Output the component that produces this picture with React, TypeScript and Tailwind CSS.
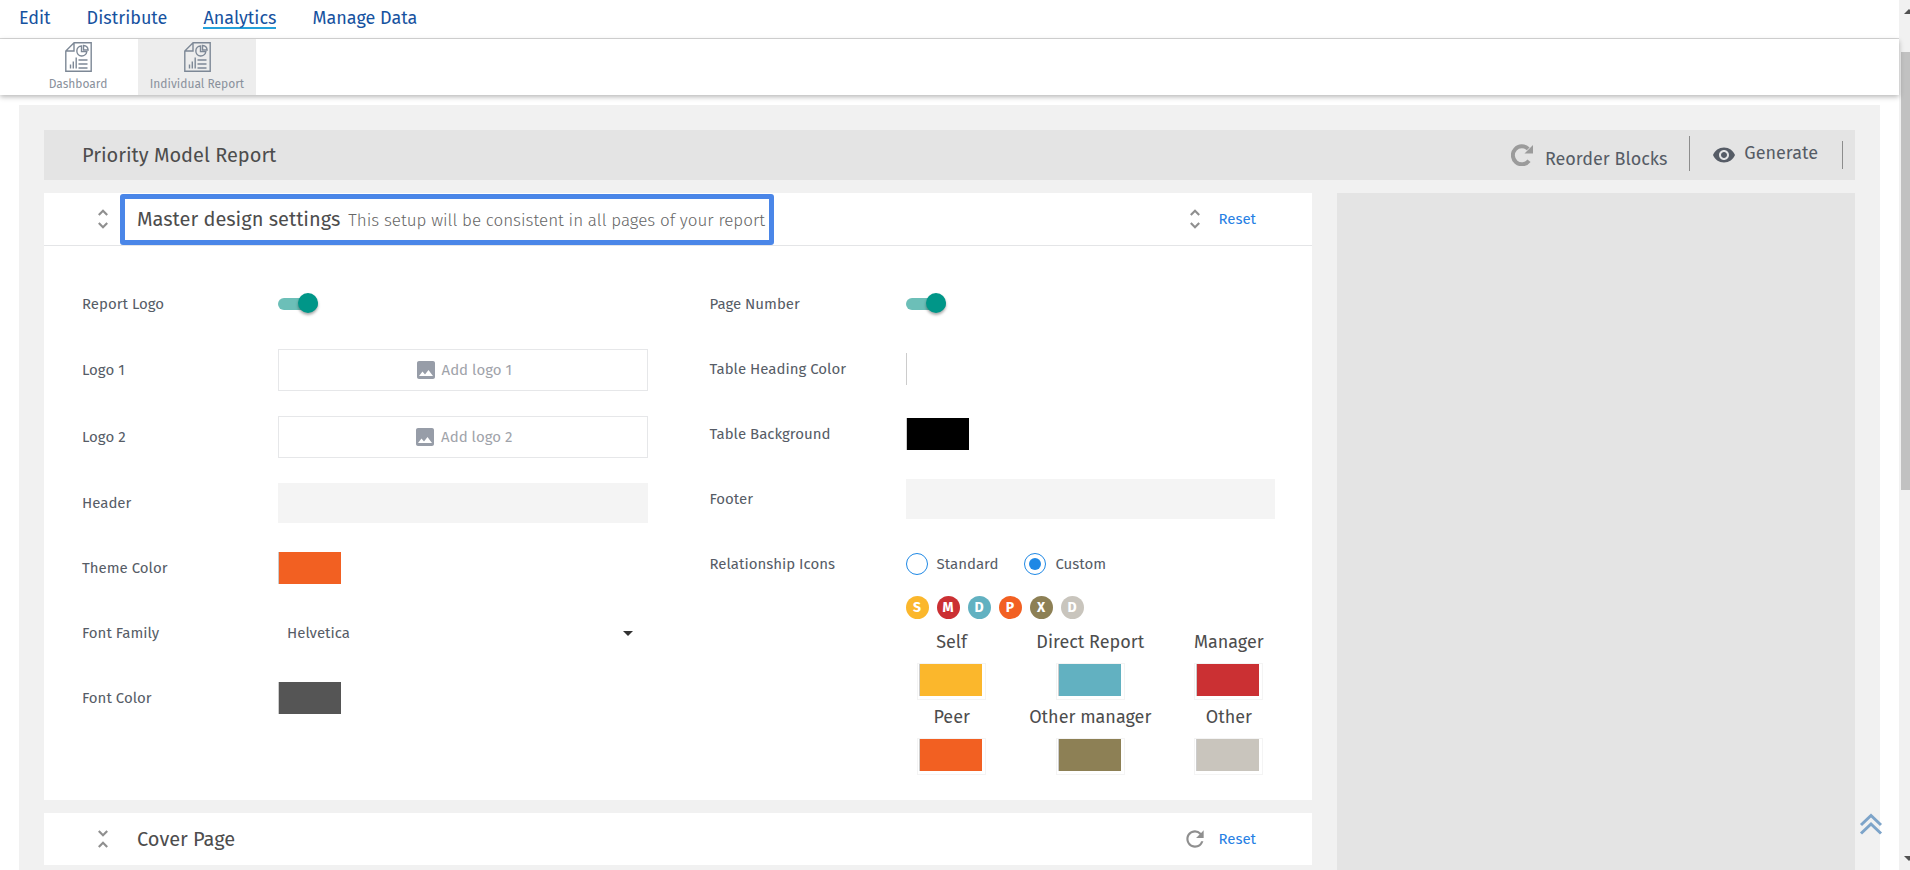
import React, { useState } from 'react';
import { MdArrowDropDown, MdImage, MdRefresh, MdUnfoldLess, MdUnfoldMore, MdVisibility } from 'react-icons/md';

const navItems = ['Edit', 'Distribute', 'Analytics', 'Manage Data'];

const badges = [
  { letter: 'S', color: '#fbb72c' },
  { letter: 'M', color: '#cb3033' },
  { letter: 'D', color: '#62b1c1' },
  { letter: 'P', color: '#f26022' },
  { letter: 'X', color: '#8d8055' },
  { letter: 'D', color: '#c9c5bd' },
];

const relations = [
  { name: 'Self', color: '#fbb72c' },
  { name: 'Direct Report', color: '#62b1c1' },
  { name: 'Manager', color: '#cb3033' },
  { name: 'Peer', color: '#f26022' },
  { name: 'Other manager', color: '#8d8055' },
  { name: 'Other', color: '#c9c5bd' },
];

const ReportIcon: React.FC = () => (
  <svg width="27" height="30" viewBox="0 0 27 30" fill="none" stroke="#7d8896" strokeWidth="1.4" aria-hidden="true">
    <path d="M9 .8H26.200V29.200H.8V9L9 .8V9H.8" />
    <path d="M16.500 4a5 5 0 1 0 5.300 5.600h-5.300z" />
    <path d="M18.500 3.500a4.800 4.800 0 0 1 4.600 4.500h-4.600z" />
    <path d="M5.500 26.500v-4M8.300 26.500v-7M11.200 26.500V15.500M13.500 18h9M13.500 22h9M13.500 26h9" />
  </svg>
);

const ReorderIcon: React.FC = () => (
  <svg width="22" height="22" viewBox="0 0 22 22" aria-hidden="true">
    <path d="M18 16.800A9 9 0 1 1 17.200 4.900" fill="none" stroke="#9b9b9b" strokeWidth="4" />
    <path d="M22 1v8.500h-8.500z" fill="#9b9b9b" />
  </svg>
);

interface RowProps {
  label: string;
  htmlFor?: string;
  children: React.ReactNode;
}

const Row: React.FC<RowProps> = ({ label, htmlFor, children }) => (
  <div className="flex min-h-10 items-center">
    <label htmlFor={htmlFor} className="w-[196px] shrink-0 text-[15px]">{label}</label>
    <div className="flex min-w-0 flex-1 items-center">{children}</div>
  </div>
);

const Toggle: React.FC<{ id: string }> = ({ id }) => (
  <input
    id={id}
    type="checkbox"
    role="switch"
    defaultChecked
    className="relative h-3 w-10 cursor-pointer appearance-none rounded-full bg-[#b5b5b5] checked:bg-[#6cbfb8] after:absolute after:-top-[5px] after:left-0 after:size-5 after:rounded-full after:bg-white after:shadow-[0_2px_3px_rgba(0,0,0,0.35)] checked:after:left-5 checked:after:bg-[#009688]"
  />
);

const Swatch: React.FC<{ id: string; color: string }> = ({ id, color }) => (
  <input
    id={id}
    type="color"
    defaultValue={color}
    className="h-8 w-[63px] cursor-pointer appearance-none border-l border-[#cccccc] p-0 [&::-webkit-color-swatch]:rounded-none [&::-webkit-color-swatch]:border-0 [&::-webkit-color-swatch-wrapper]:p-0"
  />
);

const LogoButton: React.FC<{ id: string; text: string }> = ({ id, text }) => (
  <button id={id} className="flex h-[42px] w-full items-center justify-center gap-1 border border-[#e6e7e9] text-[15px] text-[#9fa3aa]">
    <MdImage className="size-6 text-[#979da8]" />
    {text}
  </button>
);

const textBox = 'h-10 w-full bg-[#f4f4f4] px-2 text-[15px] outline-none';

const App: React.FC = () => {
  const [iconSet, setIconSet] = useState('Custom');

  return (
    <div className="flex h-screen overflow-hidden bg-white font-['Fira_Sans','Noto_Sans',sans-serif] text-[#565c66]">
      <div className="relative flex min-w-0 flex-1 flex-col">
        <nav className="flex h-[39px] shrink-0 gap-9 border-b border-[#d8d8d8] px-[19px] pt-1 text-lg leading-7 text-[#1652a0]">
          {navItems.map((item) => (
            <a key={item} href="#" className={item === 'Analytics' ? 'h-[25px] border-b-2 border-[#24a0da]' : ''}>{item}</a>
          ))}
        </nav>

        <div className="relative z-10 flex h-14 shrink-0 bg-white pl-[18px] text-xs text-[#8a919c] shadow-[0_2px_5px_rgba(0,0,0,0.28)]">
          <a href="#" className="flex w-[120px] flex-col items-center gap-1 pt-[3px]">
            <ReportIcon />
            Dashboard
          </a>
          <a href="#" className="flex w-[118px] flex-col items-center gap-1 bg-[#ededed] pt-[3px]">
            <ReportIcon />
            Individual Report
          </a>
        </div>

        <main className="mx-[19px] mt-[10px] flex min-h-0 flex-1 flex-col overflow-hidden bg-[#f1f1f1] px-[25px] pt-[25px]">
          <header className="flex h-[50px] shrink-0 items-center bg-[#e4e4e4] pr-3 pl-[38px]">
            <h1 className="flex-1 text-xl text-[#4d4d4d]">Priority Model Report</h1>
            <button className="flex items-center gap-3 text-lg">
              <ReorderIcon />
              <span className="pt-2">Reorder Blocks</span>
            </button>
            <div className="mb-1 ml-[22px] h-[35px] w-px bg-[#8d8d8d]" />
            <button className="ml-[22px] flex items-center gap-2 text-lg">
              <MdVisibility className="size-6" />
              <span className="pb-1">Generate</span>
            </button>
            <div className="ml-6 h-7 w-px bg-[#8d8d8d]" />
          </header>

          <div className="mt-[13px] flex min-h-0 flex-1 gap-[25px]">
            <div className="flex min-w-0 flex-[1268_1_0%] flex-col gap-[13px]">
              <section className="shrink-0 bg-white">
                <div className="flex h-[53px] items-center border-b border-[#e4e5e7] pr-14 pl-[46px]">
                  <button aria-label="Collapse" className="text-[#8f8f8f]"><MdUnfoldMore className="size-[26px]" /></button>
                  <div className="ml-1 flex h-[51px] items-baseline gap-2 rounded-[3px] border-[5px] border-[#4a86e8] pt-[6px] pr-1 pl-3">
                    <h2 className="text-xl text-[#4d4d4d]">Master design settings</h2>
                    <p className="text-[17px] font-light text-[#666666]">This setup will be consistent in all pages of your report</p>
                  </div>
                  <MdUnfoldMore className="ml-auto size-[26px] text-[#8f8f8f]" />
                  <button className="ml-[10px] text-[15px] text-[#2680e4]">Reset</button>
                </div>

                <div className="grid grid-cols-2 gap-x-[62px] pt-[38px] pr-[37px] pb-[23px] pl-[38px]">
                  <div className="flex flex-col gap-[25px]">
                    <Row label="Report Logo" htmlFor="report-logo"><Toggle id="report-logo" /></Row>
                    <Row label="Logo 1" htmlFor="logo-1"><LogoButton id="logo-1" text="Add logo 1" /></Row>
                    <Row label="Logo 2" htmlFor="logo-2"><LogoButton id="logo-2" text="Add logo 2" /></Row>
                    <Row label="Header" htmlFor="header"><input id="header" type="text" className={textBox} /></Row>
                    <Row label="Theme Color" htmlFor="theme-color"><Swatch id="theme-color" color="#f26022" /></Row>
                    <Row label="Font Family" htmlFor="font-family">
                      <div className="relative w-full">
                        <select id="font-family" className="h-10 w-full appearance-none bg-transparent px-[9px] text-[15px]">
                          <option>Helvetica</option>
                        </select>
                        <MdArrowDropDown className="pointer-events-none absolute top-2 right-2 size-6 text-[#333333]" />
                      </div>
                    </Row>
                    <Row label="Font Color" htmlFor="font-color"><Swatch id="font-color" color="#555555" /></Row>
                  </div>

                  <div className="flex flex-col">
                    <div className="flex flex-col gap-[25px]">
                      <Row label="Page Number" htmlFor="page-number"><Toggle id="page-number" /></Row>
                      <Row label="Table Heading Color" htmlFor="heading-color"><Swatch id="heading-color" color="#ffffff" /></Row>
                      <Row label="Table Background" htmlFor="table-background"><Swatch id="table-background" color="#000000" /></Row>
                      <Row label="Footer" htmlFor="footer"><input id="footer" type="text" className={textBox} /></Row>
                      <Row label="Relationship Icons">
                        <div className="flex gap-[26px]">
                          {['Standard', 'Custom'].map((option) => (
                            <label key={option} className="flex items-center gap-[9px] text-[15px]">
                              <input
                                type="radio"
                                name="icon-set"
                                checked={iconSet === option}
                                onChange={() => setIconSet(option)}
                                className="size-[22px] appearance-none rounded-full border border-[#1e88e5] bg-clip-content p-1 checked:bg-[#1e88e5]"
                              />
                              {option}
                            </label>
                          ))}
                        </div>
                      </Row>
                    </div>

                    <div className="mt-3 pl-[196px]">
                      <div className="flex gap-2">
                        {badges.map((badge, i) => (
                          <span
                            key={i}
                            className="flex size-[23px] items-center justify-center rounded-full text-sm font-bold text-white"
                            style={{ backgroundColor: badge.color }}
                          >
                            {badge.letter}
                          </span>
                        ))}
                      </div>
                      <div className="mt-2 grid grid-cols-4">
                        {relations.map((relation, i) => (
                          <label
                            key={relation.name}
                            className={`flex h-[75px] flex-col items-center gap-1.5 text-lg leading-[30px] text-[#4d4d4d] ${i % 3 === 1 ? 'col-span-2' : ''}`}
                          >
                            {relation.name}
                            <span className="flex h-[37px] w-[69px] border border-[#f4f4f4] pl-px">
                              <Swatch id={`relation-${i}`} color={relation.color} />
                            </span>
                          </label>
                        ))}
                      </div>
                    </div>
                  </div>
                </div>
              </section>

              <section className="flex h-[52px] shrink-0 items-center bg-white pr-14 pl-[46px]">
                <button aria-label="Expand" className="text-[#8f8f8f]"><MdUnfoldLess className="size-[26px]" /></button>
                <h2 className="ml-[21px] text-xl text-[#4d4d4d]">Cover Page</h2>
                <MdRefresh className="ml-auto size-[26px] text-[#8f8f8f]" />
                <button className="ml-[10px] text-[15px] text-[#2680e4]">Reset</button>
              </section>
            </div>

            <aside className="flex-[518_1_0%] bg-[#e4e4e4]" />
          </div>
        </main>

        <a href="#" aria-label="Back to top" className="absolute right-4 bottom-[35px] z-20">
          <svg width="24" height="22" viewBox="0 0 24 22" fill="none" stroke="#7da4c9" strokeWidth="3">
            <path d="M2 12 12 2.500 22 12M2 20.500 12 11 22 20.500" />
          </svg>
        </a>
      </div>

      <div className="flex w-[11px] shrink-0 flex-col overflow-hidden bg-[#f1f1f1]">
        <svg width="11" height="52" viewBox="0 0 11 52" className="shrink-0"><path d="M5 14 10 9l5 5z" fill="#505050" /></svg>
        <div className="ml-0.5 h-[438px] bg-[#c1c1c1]" />
        <svg width="11" height="20" viewBox="0 0 11 20" className="mt-auto shrink-0"><path d="M5 6h10l-5 5z" fill="#505050" /></svg>
      </div>
    </div>
  );
};

export default App;
